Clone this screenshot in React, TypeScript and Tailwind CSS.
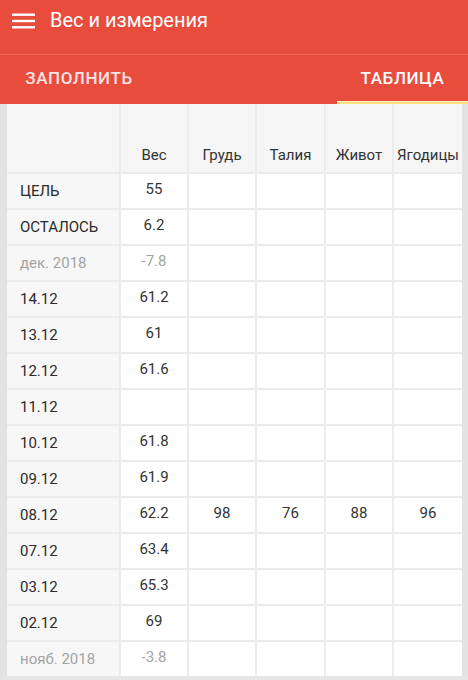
import React from 'react';

interface Row {
  label: string;
  values: string[];
  muted?: boolean;
}

const columns = ['Вес', 'Грудь', 'Талия', 'Живот', 'Ягодицы'];

const rows: Row[] = [
  { label: 'ЦЕЛЬ', values: ['55', '', '', '', ''] },
  { label: 'ОСТАЛОСЬ', values: ['6.2', '', '', '', ''] },
  { label: 'дек. 2018', values: ['-7.8', '', '', '', ''], muted: true },
  { label: '14.12', values: ['61.2', '', '', '', ''] },
  { label: '13.12', values: ['61', '', '', '', ''] },
  { label: '12.12', values: ['61.6', '', '', '', ''] },
  { label: '11.12', values: ['', '', '', '', ''] },
  { label: '10.12', values: ['61.8', '', '', '', ''] },
  { label: '09.12', values: ['61.9', '', '', '', ''] },
  { label: '08.12', values: ['62.2', '98', '76', '88', '96'] },
  { label: '07.12', values: ['63.4', '', '', '', ''] },
  { label: '03.12', values: ['65.3', '', '', '', ''] },
  { label: '02.12', values: ['69', '', '', '', ''] },
  { label: 'нояб. 2018', values: ['-3.8', '', '', '', ''], muted: true },
];

const App: React.FC = () => {
  return (
    <div className="w-[468px] h-[680px] overflow-hidden bg-[#e6e6e6] font-['Roboto',sans-serif]">
      {/* app bar */}
      <div className="h-[55px] bg-[#e84c3d] flex items-start pt-[8px] border-b border-[#ec6456]">
        <svg className="ml-[12px] mt-[5px]" width="23" height="16" viewBox="0 0 23 16">
          <rect x="0" y="0.5" width="23" height="2.4" fill="#fff" />
          <rect x="0" y="6.8" width="23" height="2.4" fill="#fff" />
          <rect x="0" y="13.1" width="23" height="2.4" fill="#fff" />
        </svg>
        <span className="ml-[15px] text-white text-[20px] leading-[24px]">Вес и измерения</span>
      </div>

      {/* tabs */}
      <div className="h-[49px] bg-[#e84c3d] flex justify-between">
        <div className="w-[158px] flex items-center justify-center text-[17px] font-medium tracking-[0.6px] text-white/85 pb-[2px]">
          ЗАПОЛНИТЬ
        </div>
        <div className="w-[131px] flex flex-col">
          <div className="flex-1 flex items-center justify-center text-[17px] font-medium tracking-[0.6px] text-white pt-[1px]">
            ТАБЛИЦА
          </div>
          <div className="h-[3px] bg-[#fbe27e] border-t border-[#fdf0b8]" />
        </div>
      </div>

      {/* table */}
      <div className="flex">
        <div className="w-[7px] bg-[#e3e3e3]" />
        <div className="w-[455px] grid grid-cols-[112px_66px_66px_67px_66px_68px] gap-[2px] bg-[#ebebeb]">
          <div className="h-[68px] bg-[#f5f5f5]" />
          {columns.map((c) => (
            <div key={c} className="h-[68px] bg-[#f5f5f5] flex items-end justify-center pb-[6px] text-[15px] text-[#333]">
              {c}
            </div>
          ))}
          {rows.map((r) => (
            <React.Fragment key={r.label}>
              <div
                className={`h-[34px] bg-[#f7f7f7] flex items-center pl-[13px] text-[15px] ${
                  r.muted ? 'text-[#a3a3a3]' : 'text-[#2a2a2a]'
                }`}
              >
                {r.label}
              </div>
              {r.values.map((v, i) => (
                <div
                  key={i}
                  className={`h-[34px] bg-white flex items-center justify-center pb-[3px] text-[15px] ${
                    r.muted ? 'text-[#a3a3a3]' : 'text-[#333]'
                  }`}
                >
                  {v}
                </div>
              ))}
            </React.Fragment>
          ))}
        </div>
        <div className="w-[6px] bg-[#e3e3e3]" />
      </div>
    </div>
  );
};

export default App;
